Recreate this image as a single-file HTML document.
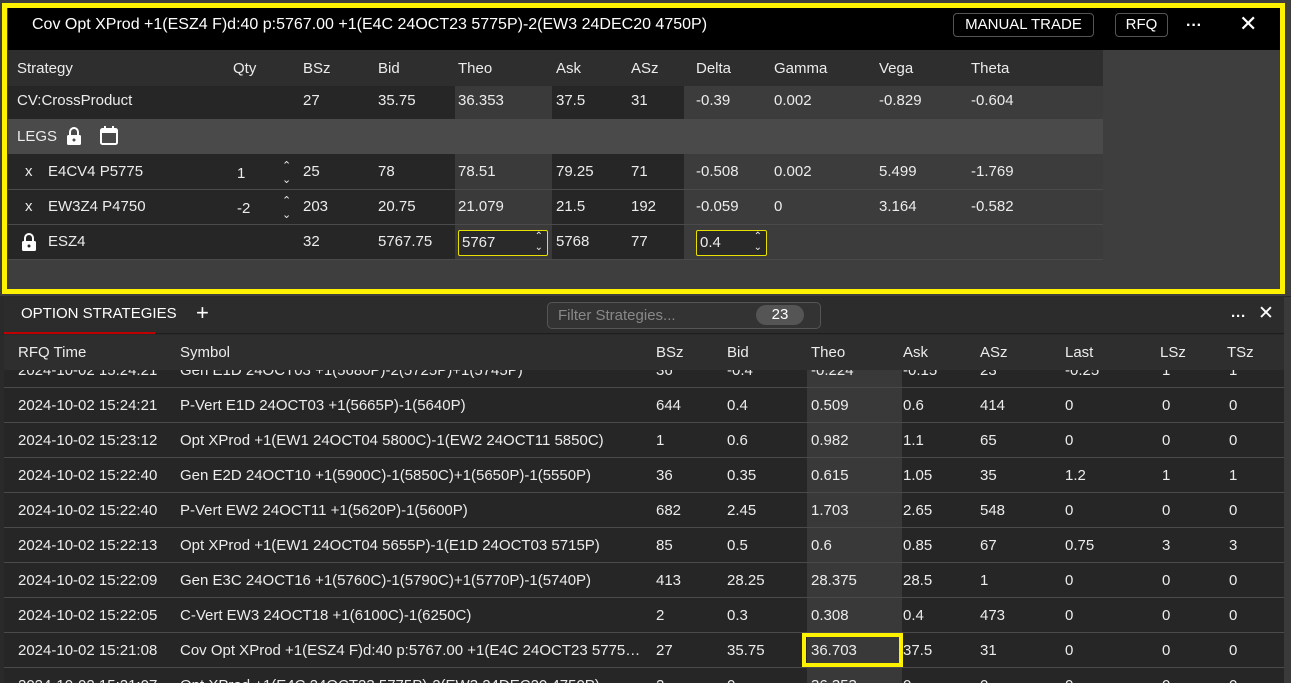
<!DOCTYPE html>
<html><head><meta charset="utf-8"><style>
*{margin:0;padding:0;box-sizing:border-box}
body{width:1291px;height:683px;overflow:hidden;background:#2a2a2a;font-family:"Liberation Sans Narrow","Liberation Sans",sans-serif;font-size:15px;color:#ececec;position:relative}
.a{position:absolute}
.r{position:absolute;left:0;height:35px}
.r span{position:absolute;top:0;line-height:35px;white-space:nowrap}
.sep{border-bottom:1px solid #4a4a4a}
</style></head><body>
<div class="a" style="left:0;top:0;width:1291px;height:296px;background:#3e3e3e"></div>
<div class="a" style="left:8px;top:8px;width:1272px;height:42px;background:#000"></div>
<div class="a" style="left:32px;top:8px;line-height:34px;color:#fff;font-size:16px">Cov Opt XProd +1(ESZ4 F)d:40 p:5767.00 +1(E4C 24OCT23 5775P)-2(EW3 24DEC20 4750P)</div>
<div class="a" style="left:953px;top:13px;width:141px;height:24px;border:1px solid #555;border-radius:4px;color:#fff;text-align:center;line-height:22px">MANUAL TRADE</div>
<div class="a" style="left:1115px;top:13px;width:53px;height:24px;border:1px solid #555;border-radius:4px;color:#fff;text-align:center;line-height:22px">RFQ</div>
<div class="a" style="left:1186px;top:17px;color:#fff;font-weight:bold;font-size:16px">···</div>
<div class="a" style="left:1239px;top:11px;color:#fff;font-size:22px;line-height:26px">✕</div>
<div class="a" style="left:8px;top:50px;width:1095px;height:36px;background:#2e2e2e"></div>
<div class="a" style="left:8px;top:86px;width:447px;height:33px;background:#262626"></div>
<div class="a" style="left:455px;top:86px;width:97px;height:33px;background:#3a3a3a"></div>
<div class="a" style="left:552px;top:86px;width:132px;height:33px;background:#262626"></div>
<div class="a" style="left:684px;top:86px;width:419px;height:33px;background:#3c3c3c"></div>
<div class="a" style="left:8px;top:119px;width:1095px;height:35px;background:#4a4a4a"></div>
<div class="a" style="left:8px;top:154px;width:447px;height:105px;background:#262626"></div>
<div class="a" style="left:455px;top:154px;width:97px;height:105px;background:#3a3a3a"></div>
<div class="a" style="left:552px;top:154px;width:132px;height:105px;background:#262626"></div>
<div class="a" style="left:684px;top:154px;width:419px;height:105px;background:#3c3c3c"></div>
<div class="a" style="left:8px;top:189px;width:1095px;height:1px;background:#4a4a4a"></div>
<div class="a" style="left:8px;top:224px;width:1095px;height:1px;background:#4a4a4a"></div>
<div class="a" style="left:8px;top:259px;width:1095px;height:1px;background:#4a4a4a"></div>
<div class="r" style="top:51px"><span style="left:17px">Strategy</span><span style="left:233px">Qty</span><span style="left:303px">BSz</span><span style="left:378px">Bid</span><span style="left:458px">Theo</span><span style="left:556px">Ask</span><span style="left:631px">ASz</span><span style="left:696px">Delta</span><span style="left:774px">Gamma</span><span style="left:879px">Vega</span><span style="left:971px">Theta</span></div>
<div class="r" style="top:83px"><span style="left:17px">CV:CrossProduct</span><span style="left:303px">27</span><span style="left:378px">35.75</span><span style="left:458px">36.353</span><span style="left:556px">37.5</span><span style="left:631px">31</span><span style="left:696px">-0.39</span><span style="left:774px">0.002</span><span style="left:879px">-0.829</span><span style="left:971px">-0.604</span></div>
<div class="r" style="top:119px"><span style="left:17px">LEGS</span></div>
<svg class="a" style="left:66px;top:126px" width="16" height="20" viewBox="0 0 16 20"><path d="M4 9V6a4 4 0 0 1 8 0v3" fill="none" stroke="#fff" stroke-width="2"/><rect x="1" y="9" width="14" height="10" rx="1.5" fill="#fff"/><circle cx="8" cy="14" r="1.5" fill="#4a4a4a"/></svg>
<svg class="a" style="left:99px;top:126px" width="20" height="20" viewBox="0 0 20 20"><rect x="2" y="3" width="16" height="15" rx="1.5" fill="none" stroke="#fff" stroke-width="2"/><rect x="2" y="3" width="16" height="4" fill="#fff"/><rect x="5" y="0" width="2" height="4" fill="#fff"/><rect x="13" y="0" width="2" height="4" fill="#fff"/></svg>
<div class="r" style="top:154px"><span style="left:25px">x</span><span style="left:48px">E4CV4 P5775</span><span style="left:237px;top:2px">1</span><span style="left:282px;font-size:11px;line-height:14px;top:5px">⌃<br>⌄</span><span style="left:303px">25</span><span style="left:378px">78</span><span style="left:458px">78.51</span><span style="left:556px">79.25</span><span style="left:631px">71</span><span style="left:696px">-0.508</span><span style="left:774px">0.002</span><span style="left:879px">5.499</span><span style="left:971px">-1.769</span></div>
<div class="r" style="top:189px"><span style="left:25px">x</span><span style="left:48px">EW3Z4 P4750</span><span style="left:237px;top:2px">-2</span><span style="left:282px;font-size:11px;line-height:14px;top:5px">⌃<br>⌄</span><span style="left:303px">203</span><span style="left:378px">20.75</span><span style="left:458px">21.079</span><span style="left:556px">21.5</span><span style="left:631px">192</span><span style="left:696px">-0.059</span><span style="left:774px">0</span><span style="left:879px">3.164</span><span style="left:971px">-0.582</span></div>
<svg class="a" style="left:21px;top:232px" width="16" height="20" viewBox="0 0 16 20"><path d="M4 9V6a4 4 0 0 1 8 0v3" fill="none" stroke="#fff" stroke-width="2"/><rect x="1" y="9" width="14" height="10" rx="1.5" fill="#fff"/><circle cx="8" cy="14" r="1.5" fill="#262626"/></svg>
<div class="r" style="top:224px"><span style="left:48px">ESZ4</span><span style="left:303px">32</span><span style="left:378px">5767.75</span><span style="left:556px">5768</span><span style="left:631px">77</span></div>
<div class="a" style="left:458px;top:230px;width:90px;height:26px;border:1px solid #e8e000;border-radius:2px;background:#2a2a2a;line-height:24px;padding-left:3px">5767<span style="position:absolute;right:4px;top:0;font-size:10px;line-height:11px">⌃<br>⌄</span></div>
<div class="a" style="left:696px;top:230px;width:71px;height:26px;border:1px solid #e8e000;border-radius:2px;background:#2a2a2a;line-height:24px;padding-left:3px">0.4<span style="position:absolute;right:4px;top:0;font-size:10px;line-height:11px">⌃<br>⌄</span></div>
<div class="a" style="left:2px;top:3px;width:1283px;height:291px;border:5px solid #fff200"></div>
<div class="a" style="left:4px;top:297px;width:1280px;height:37px;background:#2c2c2c;border-bottom:1px solid #1e1e1e"></div>
<div class="a" style="left:21px;top:305px;color:#fff">OPTION STRATEGIES</div>
<div class="a" style="left:196px;top:300px;color:#fff;font-size:22px">+</div>
<div class="a" style="left:4px;top:332px;width:151px;height:2px;background:#c00000"></div>
<div class="a" style="left:547px;top:302px;width:274px;height:27px;border:1px solid #555;border-radius:5px;background:#333;color:#888;line-height:25px;padding-left:10px">Filter Strategies...</div>
<div class="a" style="left:756px;top:305px;width:48px;height:20px;border-radius:10px;background:#555;color:#fff;text-align:center;line-height:20px">23</div>
<div class="a" style="left:1231px;top:308px;color:#fff;font-weight:bold">···</div>
<div class="a" style="left:1258px;top:302px;color:#fff;font-size:19px">✕</div>
<div class="a" style="left:4px;top:335px;width:1280px;height:348px;background:#262626;overflow:hidden">
<div class="a" style="left:803px;top:0;width:95px;height:348px;background:#393939"></div>
<div style="position:absolute;left:-4px;top:18px;width:1288px">
<div class="r sep" style="top:0;width:1288px"><span style="left:18px">2024-10-02 15:24:21</span><span style="left:180px">Gen E1D 24OCT03 +1(5680P)-2(5725P)+1(5745P)</span><span style="left:656px">36</span><span style="left:727px">-0.4</span><span style="left:811px">-0.224</span><span style="left:903px">-0.15</span><span style="left:980px">23</span><span style="left:1065px">-0.25</span><span style="left:1162px">1</span><span style="left:1229px">1</span></div>
<div class="r sep" style="top:35px;width:1288px"><span style="left:18px">2024-10-02 15:24:21</span><span style="left:180px">P-Vert E1D 24OCT03 +1(5665P)-1(5640P)</span><span style="left:656px">644</span><span style="left:727px">0.4</span><span style="left:811px">0.509</span><span style="left:903px">0.6</span><span style="left:980px">414</span><span style="left:1065px">0</span><span style="left:1162px">0</span><span style="left:1229px">0</span></div>
<div class="r sep" style="top:70px;width:1288px"><span style="left:18px">2024-10-02 15:23:12</span><span style="left:180px">Opt XProd +1(EW1 24OCT04 5800C)-1(EW2 24OCT11 5850C)</span><span style="left:656px">1</span><span style="left:727px">0.6</span><span style="left:811px">0.982</span><span style="left:903px">1.1</span><span style="left:980px">65</span><span style="left:1065px">0</span><span style="left:1162px">0</span><span style="left:1229px">0</span></div>
<div class="r sep" style="top:105px;width:1288px"><span style="left:18px">2024-10-02 15:22:40</span><span style="left:180px">Gen E2D 24OCT10 +1(5900C)-1(5850C)+1(5650P)-1(5550P)</span><span style="left:656px">36</span><span style="left:727px">0.35</span><span style="left:811px">0.615</span><span style="left:903px">1.05</span><span style="left:980px">35</span><span style="left:1065px">1.2</span><span style="left:1162px">1</span><span style="left:1229px">1</span></div>
<div class="r sep" style="top:140px;width:1288px"><span style="left:18px">2024-10-02 15:22:40</span><span style="left:180px">P-Vert EW2 24OCT11 +1(5620P)-1(5600P)</span><span style="left:656px">682</span><span style="left:727px">2.45</span><span style="left:811px">1.703</span><span style="left:903px">2.65</span><span style="left:980px">548</span><span style="left:1065px">0</span><span style="left:1162px">0</span><span style="left:1229px">0</span></div>
<div class="r sep" style="top:175px;width:1288px"><span style="left:18px">2024-10-02 15:22:13</span><span style="left:180px">Opt XProd +1(EW1 24OCT04 5655P)-1(E1D 24OCT03 5715P)</span><span style="left:656px">85</span><span style="left:727px">0.5</span><span style="left:811px">0.6</span><span style="left:903px">0.85</span><span style="left:980px">67</span><span style="left:1065px">0.75</span><span style="left:1162px">3</span><span style="left:1229px">3</span></div>
<div class="r sep" style="top:210px;width:1288px"><span style="left:18px">2024-10-02 15:22:09</span><span style="left:180px">Gen E3C 24OCT16 +1(5760C)-1(5790C)+1(5770P)-1(5740P)</span><span style="left:656px">413</span><span style="left:727px">28.25</span><span style="left:811px">28.375</span><span style="left:903px">28.5</span><span style="left:980px">1</span><span style="left:1065px">0</span><span style="left:1162px">0</span><span style="left:1229px">0</span></div>
<div class="r sep" style="top:245px;width:1288px"><span style="left:18px">2024-10-02 15:22:05</span><span style="left:180px">C-Vert EW3 24OCT18 +1(6100C)-1(6250C)</span><span style="left:656px">2</span><span style="left:727px">0.3</span><span style="left:811px">0.308</span><span style="left:903px">0.4</span><span style="left:980px">473</span><span style="left:1065px">0</span><span style="left:1162px">0</span><span style="left:1229px">0</span></div>
<div class="r sep" style="top:280px;width:1288px"><span style="left:18px">2024-10-02 15:21:08</span><span style="left:180px;width:470px;overflow:hidden;text-overflow:ellipsis">Cov Opt XProd +1(ESZ4 F)d:40 p:5767.00 +1(E4C 24OCT23 5775P)-2(EW3 24DEC20 4750P)</span><span style="left:656px">27</span><span style="left:727px">35.75</span><span style="left:811px">36.703</span><span style="left:903px">37.5</span><span style="left:980px">31</span><span style="left:1065px">0</span><span style="left:1162px">0</span><span style="left:1229px">0</span></div>
<div class="r sep" style="top:315px;width:1288px"><span style="left:18px">2024-10-02 15:21:07</span><span style="left:180px">Opt XProd +1(E4C 24OCT23 5775P)-2(EW3 24DEC20 4750P)</span><span style="left:656px">2</span><span style="left:727px">0</span><span style="left:811px">36.353</span><span style="left:903px">0</span><span style="left:980px">0</span><span style="left:1065px">0</span><span style="left:1162px">0</span><span style="left:1229px">0</span></div>
</div>
<div class="a" style="left:0;top:0;width:1280px;height:35px;background:#2e2e2e"></div>
<div class="r" style="top:0;left:-4px;width:1288px"><span style="left:18px">RFQ Time</span><span style="left:180px">Symbol</span><span style="left:656px">BSz</span><span style="left:727px">Bid</span><span style="left:811px">Theo</span><span style="left:903px">Ask</span><span style="left:980px">ASz</span><span style="left:1065px">Last</span><span style="left:1160px">LSz</span><span style="left:1227px">TSz</span></div>
</div>
<div class="a" style="left:802px;top:633px;width:101px;height:34px;border:4px solid #fff200"></div>
<div class="a" style="left:1284px;top:297px;width:7px;height:386px;background:#3a3a3a"></div>
</body></html>
